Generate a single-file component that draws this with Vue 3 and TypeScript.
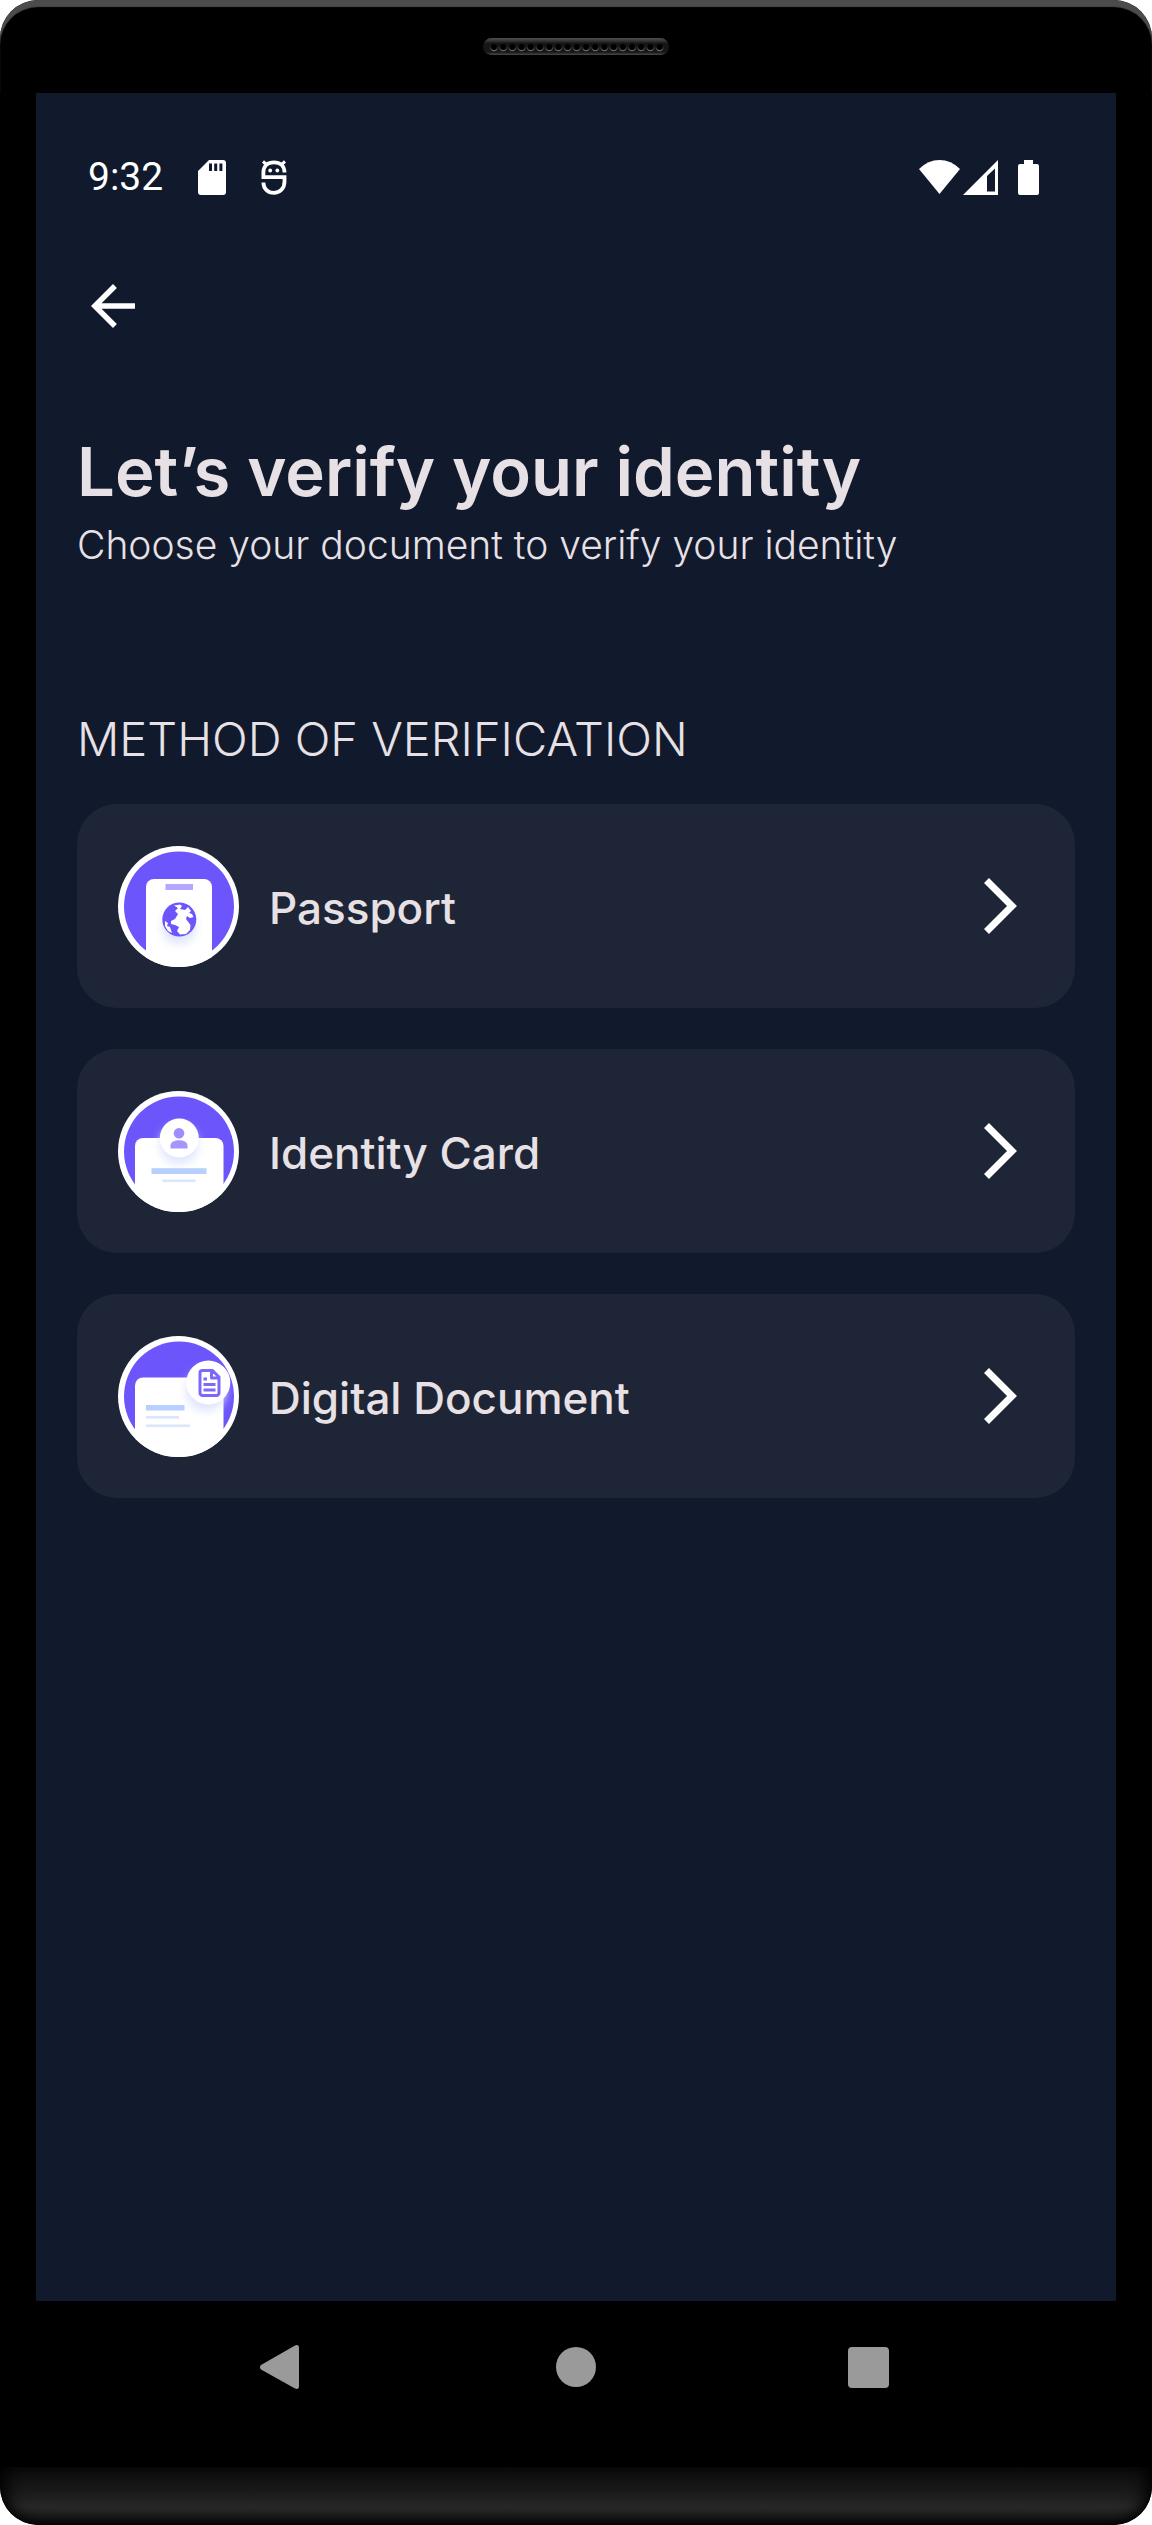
<script setup lang="ts">
type MethodKind = 'passport' | 'card' | 'document'

interface Method {
  kind: MethodKind
  label: string
}

const methods: Method[] = [
  { kind: 'passport', label: 'Passport' },
  { kind: 'card', label: 'Identity Card' },
  { kind: 'document', label: 'Digital Document' },
]

const speakerHoles: number[] = Array.from({ length: 19 }, (_, i) => 11 + i * 9.2)
</script>

<template>
  <div class="phone">
    <div class="bezel">
      <svg class="speaker" viewBox="0 0 186 17" aria-hidden="true">
        <defs>
          <linearGradient id="grille" x1="0" y1="0" x2="0" y2="1">
            <stop offset="0" stop-color="#505050" />
            <stop offset="0.22" stop-color="#2c2c2c" />
            <stop offset="0.3" stop-color="#161616" />
            <stop offset="0.82" stop-color="#161616" />
            <stop offset="1" stop-color="#4a4a4a" />
          </linearGradient>
          <linearGradient id="hole" x1="0" y1="0" x2="0" y2="1">
            <stop offset="0.4" stop-color="#161616" />
            <stop offset="1" stop-color="#6a6a6a" />
          </linearGradient>
        </defs>
        <rect width="186" height="17" rx="8.5" fill="url(#grille)" />
        <circle
          v-for="x in speakerHoles"
          :key="x"
          :cx="x"
          cy="9"
          r="3.6"
          fill="#000"
          stroke="url(#hole)"
          stroke-width="1.2"
        />
      </svg>
    </div>

    <main class="screen">
      <header class="status">
        <time class="clock">9:32</time>
        <svg class="sd" viewBox="0 0 28 35" aria-label="SD card">
          <path
            fill="#fff"
            fill-rule="evenodd"
            d="M11 0H25a3 3 0 0 1 3 3V32a3 3 0 0 1-3 3H3a3 3 0 0 1-3-3V11ZM11 3.500V11H14V3.500ZM16.200 3.500V11H19.200V3.500ZM21.400 3.500V11H24.400V3.500Z"
          />
        </svg>
        <svg class="debug" viewBox="0 0 26 35" aria-label="Debugging">
          <g fill="none" stroke="#fff" stroke-width="3.800">
            <path d="M23.500 12.500C23.500 5.500 19 2.400 13 2.400S2.400 5.500 2.400 12.500V17.200H23.500V21.500C23.500 29 18.500 32.800 12.800 32.800S2.400 29 2.400 22.500" />
            <path d="M2 1.500 6 5M24 1.500 20 5" stroke-width="3" />
          </g>
          <circle cx="9.200" cy="10.500" r="1.900" fill="#fff" />
          <circle cx="16.300" cy="10.500" r="1.900" fill="#fff" />
        </svg>
        <div class="signals">
          <svg class="wifi" viewBox="0 0 41 34" aria-label="Wi-Fi">
            <path fill="#fff" d="M0 9Q9 0 20.500 0T41 9L20.500 34Z" />
          </svg>
          <svg class="cell" viewBox="0 0 35 35" aria-label="Mobile signal">
            <path fill="#fff" fill-rule="evenodd" d="M35 0V35H0ZM32 8.500 24 16V31.500H32Z" />
          </svg>
          <svg class="battery" viewBox="0 0 21 35" aria-label="Battery">
            <path
              fill="#fff"
              d="M6 0H15V4H19a2 2 0 0 1 2 2V33a2 2 0 0 1-2 2H2a2 2 0 0 1-2-2V6a2 2 0 0 1 2-2H6Z"
            />
          </svg>
        </div>
      </header>

      <div class="appbar">
        <button type="button" class="back" aria-label="Back">
          <svg viewBox="0 0 24 24" aria-hidden="true">
            <path fill="#fff" d="M20 11H7.830l5.590-5.590L12 4l-8 8 8 8 1.410-1.410L7.830 13H20v-2z" />
          </svg>
        </button>
      </div>

      <div class="content">
        <h1>Let’s verify your identity</h1>
        <p class="lead">Choose your document to verify your identity</p>
        <h2>METHOD OF VERIFICATION</h2>

        <ul class="methods">
          <li v-for="method in methods" :key="method.kind">
            <button type="button" class="method">
              <svg class="badge" viewBox="0 0 121 121" aria-hidden="true">
                <defs>
                  <clipPath :id="`clip-${method.kind}`"><circle cx="60.5" cy="60.5" r="60.5" /></clipPath>
                  <filter :id="`soft-${method.kind}`" x="-50%" y="-50%" width="200%" height="200%">
                    <feGaussianBlur stdDeviation="4" />
                  </filter>
                </defs>
                <circle cx="60.5" cy="60.5" r="60.5" fill="#fff" />
                <circle cx="61" cy="60.5" r="55" fill="#6c56fb" />
                <g :clip-path="`url(#clip-${method.kind})`">
                  <template v-if="method.kind === 'passport'">
                    <rect x="28" y="33" width="66" height="100" rx="8" fill="#fff" />
                    <rect x="47.500" y="38" width="27.500" height="6" fill="#b5a6fe" />
                    <circle cx="61" cy="81" r="17" fill="#dfe5fd" :filter="`url(#soft-${method.kind})`" />
                    <circle cx="61.300" cy="73.500" r="17" fill="#6c56fb" />
                    <path
                      fill="#fff"
                      d="M56 59.500 62 58.500 64 60 62 63 67 64 70 61 73 65 71 67 74 68 75.500 71 72 72 69 70 68 73 71 77 72.500 79 72 84 68 88 62 88.500 59 85 61 81 57 79 53 78 53 75 57 73 60 68 57 65 60 62ZM47 75 50 77 49 80 52 81 54 87 50 85 47 80Z"
                    />
                  </template>
                  <template v-else-if="method.kind === 'card'">
                    <rect x="17" y="47" width="88.500" height="90" rx="8" fill="#fff" />
                    <circle cx="61" cy="54" r="19" fill="#dfe5fd" :filter="`url(#soft-${method.kind})`" />
                    <circle cx="61.300" cy="47" r="19.500" fill="#fff" />
                    <circle cx="61" cy="42.300" r="5.300" fill="#9f8dfd" />
                    <path fill="#a795fd" d="M52.500 57.500V54.500C52.500 47.500 69.500 47.500 69.500 54.500V57.500Z" />
                    <rect x="33.500" y="77.200" width="55" height="5.800" fill="#b7d0fe" />
                    <rect x="44.500" y="88.500" width="33" height="2.600" fill="#d8e6fe" />
                  </template>
                  <template v-else>
                    <rect x="17" y="41.500" width="88.500" height="90" rx="8" fill="#fff" />
                    <circle cx="88" cy="55" r="20" fill="#dfe5fd" :filter="`url(#soft-${method.kind})`" />
                    <circle cx="90.300" cy="46.500" r="22" fill="#fff" />
                    <path
                      fill="none"
                      stroke="#7c68fb"
                      stroke-width="3"
                      stroke-linejoin="round"
                      d="M84.500 34.500H94.500L101 41V57a2.500 2.500 0 0 1-2.500 2.500H84.500A2.500 2.500 0 0 1 82 57V37A2.500 2.500 0 0 1 84.500 34.500ZM93.500 35V42H100.500M85.500 43H89M85.500 48.500H97.500M85.500 54H97.500"
                    />
                    <rect x="28" y="69" width="38.500" height="5.500" fill="#b7d0fe" />
                    <rect x="28" y="80" width="33" height="2.600" fill="#d8e6fe" />
                    <rect x="28" y="88.500" width="44" height="2.600" fill="#d8e6fe" />
                  </template>
                </g>
              </svg>
              <span class="label">{{ method.label }}</span>
              <svg class="chevron" viewBox="0 0 33 56" aria-hidden="true">
                <path fill="none" stroke="#fff" stroke-width="7" d="M2.500 2.500 28 28 2.500 53.500" />
              </svg>
            </button>
          </li>
        </ul>
      </div>
    </main>

    <nav class="navbar" aria-label="System navigation">
      <button type="button" aria-label="Back">
        <svg viewBox="0 0 44 44" aria-hidden="true">
          <path fill="#9a9a9a" d="M1 20 35 .5Q39 -1 39 3V41Q39 45 35 43.500L1 24.500Q-1 22 1 20Z" />
        </svg>
      </button>
      <button type="button" aria-label="Home">
        <svg viewBox="0 0 44 44" aria-hidden="true"><circle cx="22" cy="22" r="20" fill="#9a9a9a" /></svg>
      </button>
      <button type="button" aria-label="Overview">
        <svg viewBox="0 0 44 44" aria-hidden="true">
          <rect x="0" y="2" width="41" height="41" rx="4" fill="#9a9a9a" />
        </svg>
      </button>
    </nav>
    <div class="chin"></div>
  </div>
</template>

<style>
body {
  margin: 0;
  background: #fff;
}
</style>

<style scoped>
.phone {
  display: flex;
  flex-direction: column;
  min-height: 100vh;
  overflow: hidden;
  border-radius: 38px;
  background: #000;
  color: #e7e1e5;
  font-family: Inter, "Liberation Sans", sans-serif;
}

button {
  padding: 0;
  border: 0;
  background: none;
  color: inherit;
  font: inherit;
  cursor: pointer;
}

svg {
  display: block;
  flex: none;
}

.bezel {
  display: flex;
  justify-content: center;
  height: 93px;
  box-sizing: border-box;
  padding-top: 38px;
  border-radius: 38px 38px 0 0;
  box-shadow: inset 0 7px 1px #4c4c4c;
}

.speaker {
  width: 186px;
  height: 17px;
}

.screen {
  flex: 1;
  margin: 0 36px;
  background: #11192d;
}

.status {
  display: flex;
  align-items: center;
  height: 168px;
  padding: 0 77px 0 52px;
}

.clock {
  color: #fff;
  font: 400 39px/48px Roboto, sans-serif;
}

.sd {
  width: 28px;
  height: 35px;
  margin-left: 35px;
}

.debug {
  width: 26px;
  height: 35px;
  margin-left: 35px;
}

.signals {
  display: flex;
  align-items: center;
  margin-left: auto;
}

.wifi {
  width: 41px;
  height: 34px;
}

.cell {
  width: 35px;
  height: 35px;
  margin-left: 3px;
}

.battery {
  width: 21px;
  height: 35px;
  margin-left: 20px;
}

.appbar {
  display: flex;
  align-items: center;
  height: 90px;
  padding: 0 44px;
}

.back svg {
  width: 66px;
  height: 66px;
}

.content {
  padding: 81px 41px 64px;
}

h1 {
  margin: 0;
  font-size: 67px;
  font-weight: 600;
  line-height: 80px;
}

.lead {
  margin: 8px 0 0;
  font-size: 39px;
  font-weight: 300;
  line-height: 50px;
}

h2 {
  margin: 139px 0 35px;
  font-size: 47px;
  font-weight: 300;
  line-height: 60px;
}

.methods {
  display: grid;
  gap: 41px;
  margin: 0;
  padding: 0;
  list-style: none;
}

.method {
  display: flex;
  align-items: center;
  width: 100%;
  height: 204px;
  padding: 0 58px 0 41px;
  border-radius: 40px;
  background: #1d2536;
}

.badge {
  width: 121px;
  height: 121px;
}

.label {
  flex: 1;
  margin-left: 30px;
  padding-top: 4px;
  font-size: 44px;
  font-weight: 500;
  line-height: 56px;
  text-align: left;
}

.chevron {
  width: 33px;
  height: 56px;
}

.navbar {
  display: grid;
  grid-template-columns: repeat(3, 294px);
  justify-content: center;
  align-items: start;
  height: 166px;
  box-sizing: border-box;
  padding-top: 44px;
}

.navbar button {
  justify-self: center;
}

.navbar svg {
  width: 44px;
  height: 44px;
}

.chin {
  height: 58px;
  border-radius: 0 0 38px 38px;
  background: linear-gradient(#0c0c0c, #181818 40%, #272727 68%, #222 78%, #0c0c0c 97%, #000);
  box-shadow: inset 12px 0 16px -6px #000, inset -12px 0 16px -6px #000;
}
</style>
